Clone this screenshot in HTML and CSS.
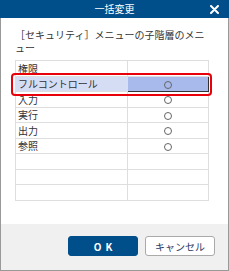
FILE: index.html
```html
<!DOCTYPE html>
<html lang="ja">

<head>
  <meta charset="UTF-8">
  <title>一括変更</title>
  <link rel="stylesheet" href="styles.css">
</head>

<body>
  <div class="dialog">
    <div class="title-bar">
      <span></span>
      <span class="title">一括変更</span>
      <span class="close-btn">
        <svg width="9" height="9" viewBox="0 0 9 9">
          <path d="M1 1 L8 8 M8 1 L1 8" stroke="#fff" stroke-width="2" stroke-linecap="round" fill="none" />
        </svg>
      </span>
    </div>

    <div class="dialog-body">
      <p class="desc">［セキュリティ］メニューの子階層のメニュー</p>

      <div class="table-wrap">
        <table class="perm-table">
          <tr>
            <td class="col-name">権限</td>
            <td></td>
          </tr>
          <tr class="selected">
            <td class="col-name">フルコントロール</td>
            <td class="col-mark"><span class="mark"></span></td>
          </tr>
          <tr>
            <td class="col-name">入力</td>
            <td class="col-mark"><span class="mark"></span></td>
          </tr>
          <tr>
            <td class="col-name">実行</td>
            <td class="col-mark"><span class="mark"></span></td>
          </tr>
          <tr>
            <td class="col-name">出力</td>
            <td class="col-mark"><span class="mark"></span></td>
          </tr>
          <tr>
            <td class="col-name">参照</td>
            <td class="col-mark"><span class="mark"></span></td>
          </tr>
          <tr>
            <td class="col-name"></td>
            <td></td>
          </tr>
          <tr>
            <td class="col-name"></td>
            <td></td>
          </tr>
          <tr>
            <td class="col-name"></td>
            <td></td>
          </tr>
        </table>
        <!-- red annotation around the selected row -->
        <div class="row-callout"></div>
      </div>
    </div>

    <div class="dialog-footer">
      <button class="btn-ok">OK</button>
      <button class="btn-cancel">キャンセル</button>
    </div>
  </div>
</body>

</html>
```

FILE: styles.css
```css
* {
  margin: 0;
  padding: 0;
  box-sizing: border-box;
  font-family: "Noto Sans CJK JP", "Noto Sans", sans-serif;
}

body {
  background-color: #fff;
  width: 229px;
  height: 271px;
}

.dialog {
  display: flex;
  flex-direction: column;
  width: 229px;
  height: 271px;
}

/* Title bar */
.title-bar {
  display: grid;
  grid-template-columns: 1fr auto 1fr;
  align-items: center;
  height: 18px;
  background-color: #004e8a;
  color: #fff;
}

.title {
  font-size: 10px;
  line-height: 18px;
}

.close-btn {
  display: flex;
  justify-self: end;
  margin-right: 10px;
}

/* Body */
.dialog-body {
  flex-grow: 1;
  border-left: 1px solid #999;
  border-right: 1px solid #999;
  padding: 10px 19px 0 14px;
}

.desc {
  width: 194px;
  font-size: 10px;
  line-height: 13px;
  color: #333;
}

.table-wrap {
  position: relative;
  margin-top: 6px;
}

.perm-table {
  width: 194px;
  border-collapse: collapse;
  font-size: 10px;
  color: #333;
}

.perm-table td {
  height: 15.5px;
  border: 1px solid #dedede;
  padding: 0 2px;
  line-height: 13px;
}

.perm-table .col-name {
  width: 112px;
}

.perm-table .col-mark {
  text-align: center;
}

.mark {
  display: inline-block;
  width: 8px;
  height: 8px;
  border: 1px solid #666;
  border-radius: 50%;
  vertical-align: middle;
  margin-top: -2px;
}

.perm-table .selected td {
  background-color: #d5ddf5;
}

.perm-table .selected .col-mark {
  background-color: #a8b9ec;
  border: 1px solid #333;
}

.row-callout {
  position: absolute;
  left: -4px;
  top: 13px;
  width: 201px;
  height: 23px;
  border: 2.5px solid #e8000b;
  border-radius: 4px;
}

/* Footer */
.dialog-footer {
  display: flex;
  justify-content: flex-end;
  gap: 7px;
  height: 47px;
  padding: 12px 13px 0 0;
  background-color: #f0f0f0;
  border-left: 1px solid #999;
  border-right: 1px solid #999;
  border-bottom: 1px solid #999;
}

.dialog-footer button {
  width: 70px;
  height: 20px;
  border-radius: 3px;
  font-size: 10px;
  cursor: pointer;
}

.btn-ok {
  background-color: #004e8a;
  color: #fff;
  border: 1px solid #004e8a;
  font-weight: bold;
  letter-spacing: 4px;
  padding-left: 4px;
}

.btn-cancel {
  background-color: #fff;
  color: #1f3a68;
  border: 1px solid #aaa;
}
```
